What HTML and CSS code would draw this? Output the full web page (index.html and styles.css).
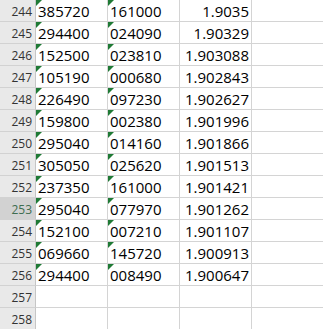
FILE: index.html
```html
<!DOCTYPE html>
<html>
<head>
<meta charset="utf-8">
<link rel="stylesheet" href="styles.css">
</head>
<body>
<div class="sheet">
  <div class="rh">244</div><div class="c t">385720</div><div class="c t">161000</div><div class="c n">1.9035</div><div class="c"></div>
  <div class="rh">245</div><div class="c t">294400</div><div class="c t">024090</div><div class="c n">1.90329</div><div class="c"></div>
  <div class="rh">246</div><div class="c t">152500</div><div class="c t">023810</div><div class="c n">1.903088</div><div class="c"></div>
  <div class="rh">247</div><div class="c t">105190</div><div class="c t">000680</div><div class="c n">1.902843</div><div class="c"></div>
  <div class="rh">248</div><div class="c t">226490</div><div class="c t">097230</div><div class="c n">1.902627</div><div class="c"></div>
  <div class="rh">249</div><div class="c t">159800</div><div class="c t">002380</div><div class="c n">1.901996</div><div class="c"></div>
  <div class="rh">250</div><div class="c t">295040</div><div class="c t">014160</div><div class="c n">1.901866</div><div class="c"></div>
  <div class="rh">251</div><div class="c t">305050</div><div class="c t">025620</div><div class="c n">1.901513</div><div class="c"></div>
  <div class="rh">252</div><div class="c t">237350</div><div class="c t">161000</div><div class="c n">1.901421</div><div class="c"></div>
  <div class="rh sel">253</div><div class="c t">295040</div><div class="c t">077970</div><div class="c n">1.901262</div><div class="c"></div>
  <div class="rh">254</div><div class="c t">152100</div><div class="c t">007210</div><div class="c n">1.901107</div><div class="c"></div>
  <div class="rh">255</div><div class="c t">069660</div><div class="c t">145720</div><div class="c n">1.900913</div><div class="c"></div>
  <div class="rh">256</div><div class="c t">294400</div><div class="c t">008490</div><div class="c n">1.900647</div><div class="c"></div>
  <div class="rh">257</div><div class="c"></div><div class="c"></div><div class="c"></div><div class="c"></div>
  <div class="rh">258</div><div class="c"></div><div class="c"></div><div class="c"></div><div class="c"></div>
</div>
</body>
</html>
```

FILE: styles.css
```css
html, body {
  margin: 0;
  padding: 0;
  background: #ffffff;
  overflow: hidden;
}

.sheet {
  display: grid;
  grid-template-columns: 36px 72px 72px 72px 72px;
  grid-auto-rows: 22px;
  font-family: "Open Sans", "Noto Sans", sans-serif;
}

.rh {
  box-sizing: border-box;
  background: #e9e9e9;
  border-right: 1px solid #c6c6c6;
  border-bottom: 1px solid #d2d2d2;
  color: #333333;
  font-size: 12px;
  line-height: 21px;
  text-align: right;
  padding: 1px 3px 0 0;
}

.rh.sel {
  background: #d2d2d2;
  color: #3f6d50;
}

.c {
  position: relative;
  box-sizing: border-box;
  border-right: 1px solid #d4d4d4;
  border-bottom: 1px solid #d4d4d4;
  color: #000000;
  font-size: 15px;
  line-height: 21px;
  padding: 1px 2px 0 2px;
  white-space: nowrap;
}

.c.n {
  text-align: right;
}

.c.t::before {
  content: "";
  position: absolute;
  left: 0;
  top: 0;
  border-top: 6px solid #1f7a35;
  border-right: 6px solid transparent;
}
```
